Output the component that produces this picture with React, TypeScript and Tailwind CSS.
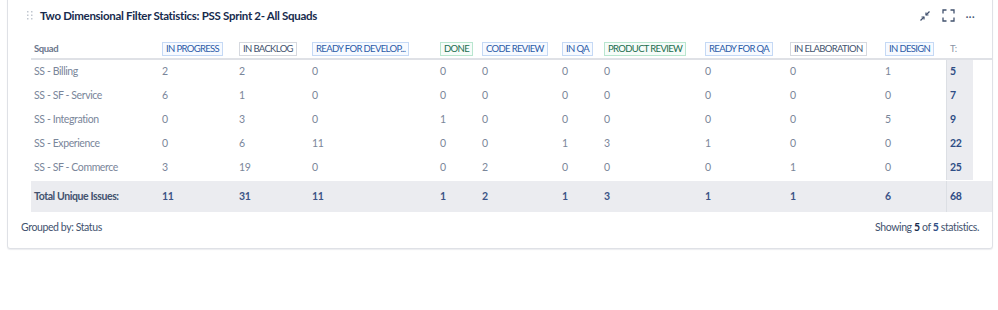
import React from 'react';

type Tone = 'blue' | 'gray' | 'green';

interface Status {
  label: string;
  tone: Tone;
}

const statuses: Status[] = [
  { label: 'IN PROGRESS', tone: 'blue' },
  { label: 'IN BACKLOG', tone: 'gray' },
  { label: 'READY FOR DEVELOP...', tone: 'blue' },
  { label: 'DONE', tone: 'green' },
  { label: 'CODE REVIEW', tone: 'blue' },
  { label: 'IN QA', tone: 'blue' },
  { label: 'PRODUCT REVIEW', tone: 'green' },
  { label: 'READY FOR QA', tone: 'blue' },
  { label: 'IN ELABORATION', tone: 'gray' },
  { label: 'IN DESIGN', tone: 'blue' },
];

const rows: { squad: string; counts: number[]; total: number }[] = [
  { squad: 'SS - Billing', counts: [2, 2, 0, 0, 0, 0, 0, 0, 0, 1], total: 5 },
  { squad: 'SS - SF - Service', counts: [6, 1, 0, 0, 0, 0, 0, 0, 0, 0], total: 7 },
  { squad: 'SS - Integration', counts: [0, 3, 0, 1, 0, 0, 0, 0, 0, 5], total: 9 },
  { squad: 'SS - Experience', counts: [0, 6, 11, 0, 0, 1, 3, 1, 0, 0], total: 22 },
  { squad: 'SS - SF - Commerce', counts: [3, 19, 0, 0, 2, 0, 0, 0, 1, 0], total: 25 },
];

const totals = [11, 31, 11, 1, 2, 1, 3, 1, 1, 6];

const toneClass: Record<Tone, string> = {
  blue: 'text-[#2a5aa8] border-[#c5d9f5] bg-[#f7faff]',
  gray: 'text-[#42526e] border-[#d6d9df] bg-white',
  green: 'text-[#216e4e] border-[#b9e6cf] bg-[#f6fcf9]',
};

// grid columns: squad, 10 statuses, total
const gridCols =
  'grid grid-cols-[128px_77px_73px_128px_42px_80px_42px_101px_85px_95px_64px_27px]';

const Lozenge = ({ status }: { status: Status }) => (
  <span
    className={`inline-flex h-[14px] items-center border px-[3px] text-[9.5px] leading-none tracking-[-0.65px] ${toneClass[status.tone]}`}
  >
    {status.label}
  </span>
);

const DragHandle = () => (
  <svg width="6" height="9" viewBox="0 0 6 9" className="text-[#c1c7d0]">
    {[0, 1].map((c) =>
      [0, 1, 2].map((r) => (
        <rect key={`${c}-${r}`} x={c * 4} y={r * 3.5} width="1.5" height="1.5" fill="currentColor" />
      ))
    )}
  </svg>
);

const MinimizeIcon = () => (
  <svg width="12" height="12" viewBox="0 0 12 12" fill="none" stroke="#42526e" strokeWidth="1.2">
    <path d="M1.5 10.5 L5 7" />
    <path d="M2.5 7 H5 V9.5" />
    <path d="M10.5 1.5 L7 5" />
    <path d="M7 2.5 V5 H9.5" />
  </svg>
);

const FullscreenIcon = () => (
  <svg width="13" height="13" viewBox="0 0 13 13" fill="none" stroke="#42526e" strokeWidth="1.3">
    <path d="M1 4.5 V1 H4.5" />
    <path d="M8.5 1 H12 V4.5" />
    <path d="M12 8.5 V12 H8.5" />
    <path d="M4.5 12 H1 V8.5" />
  </svg>
);

export default function App() {
  return (
    <div className="h-[310px] w-[998px] bg-white font-['Lato',sans-serif] text-[#172b4d]">
      <div className="ml-[7px] -mt-[6px] w-[986px] rounded-[3px] border border-[#dfe1e6] bg-white pb-[12px] shadow-[0_1px_1px_rgba(9,30,66,0.08)]">
        {/* Header */}
        <div className="flex h-[34px] items-center pl-[19px] pr-[17px] pt-[7px]">
          <DragHandle />
          <h2 className="ml-[7px] text-[11.5px] font-bold tracking-[-0.3px] text-[#172b4d]">
            Two Dimensional Filter Statistics: PSS Sprint 2- All Squads
          </h2>
          <div className="ml-auto flex items-center gap-[11px]">
            <MinimizeIcon />
            <FullscreenIcon />
            <span className="pb-[4px] text-[11px] font-bold leading-none tracking-[0.5px] text-[#42526e]">...</span>
          </div>
        </div>

        {/* Table */}
        <div className="ml-[23px] mt-[11px] text-[10.5px] tracking-[-0.4px]">
          <div className={`${gridCols} h-[20px] items-center border-b-2 border-[#dfe1e6]`}>
            <div className="pl-[3px] text-[9.5px] font-bold text-[#6b778c]">Squad</div>
            {statuses.map((s) => (
              <div key={s.label} className="pl-[3px]">
                <Lozenge status={s} />
              </div>
            ))}
            <div className="pl-[4px] text-[9.5px] text-[#8993a4]">T:</div>
          </div>

          {rows.map((row) => (
            <div key={row.squad} className={`${gridCols} h-[24px] items-center text-[#7a869a]`}>
              <div className="pl-[3px]">{row.squad}</div>
              {row.counts.map((c, i) => (
                <div key={i} className="pl-[3px]">
                  {c}
                </div>
              ))}
              <div className="flex h-full items-center border-l border-[#dcdfe4] bg-[#ebecf0] pl-[3px] font-bold text-[#2e4d85]">
                {row.total}
              </div>
            </div>
          ))}

          <div className={`${gridCols} mt-[1px] h-[31px] items-center bg-[#ebecf0] font-bold text-[#3b5487]`}>
            <div className="pl-[3px] text-[#42526e]">Total Unique Issues:</div>
            {totals.map((t, i) => (
              <div key={i} className="pl-[3px]">
                {t}
              </div>
            ))}
            <div className="flex h-full items-center border-l border-[#dcdfe4] pl-[3px] text-[#2e4d85]">68</div>
          </div>
        </div>

        {/* Footer */}
        <div className="mt-[8px] flex items-center justify-between pl-[13px] pr-[13px] text-[10.5px] tracking-[-0.4px] text-[#42526e]">
          <span>Grouped by: Status</span>
          <span>
            Showing <b className="text-[#172b4d]">5</b> of <b className="text-[#2e4d85]">5</b> statistics.
          </span>
        </div>
      </div>
    </div>
  );
}
